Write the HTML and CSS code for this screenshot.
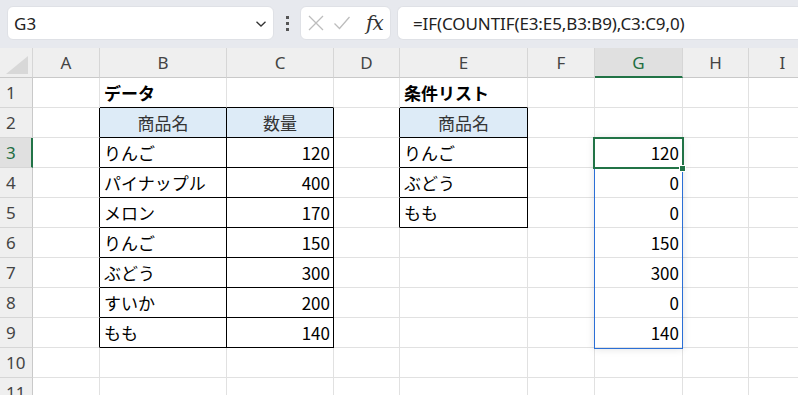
FILE: index.html
```html
<!DOCTYPE html>
<html lang="ja">
<head>
<meta charset="utf-8">
<title>Sheet</title>
<link rel="stylesheet" href="styles.css">
</head>
<body>
<div class="toolbar">
  <div class="namebox">
    <span class="name">G3</span>
    <svg class="chev" width="12" height="8" viewBox="0 0 12 8"><path d="M1.5 1.8 L6 6 L10.5 1.8" fill="none" stroke="#333" stroke-width="1.3"/></svg>
  </div>
  <div class="kebab"><i></i><i></i><i></i></div>
  <div class="fxbox">
    <svg width="18" height="18" viewBox="0 0 18 18"><path d="M2 2 L16 16 M16 2 L2 16" stroke="#bdbdbd" stroke-width="1.3" fill="none"/></svg>
    <svg width="18" height="18" viewBox="0 0 18 18"><path d="M1.5 9.5 L6.5 14.5 L16.5 3" stroke="#bdbdbd" stroke-width="1.3" fill="none"/></svg>
    <span class="fx">fx</span>
  </div>
  <div class="formula">=IF(COUNTIF(E3:E5,B3:B9),C3:C9,0)</div>
</div>

<div class="sheet">
  <div class="corner"><span class="tri"></span></div>
  <div class="ch">A</div><div class="ch">B</div><div class="ch">C</div><div class="ch">D</div><div class="ch">E</div><div class="ch">F</div><div class="ch sel">G</div><div class="ch">H</div><div class="ch">I</div>

  <div class="rh">1</div>
  <div class="c"></div><div class="c bold bb">データ</div><div class="c bb"></div><div class="c"></div><div class="c bold bb">条件リスト</div><div class="c"></div><div class="c"></div><div class="c"></div><div class="c"></div>

  <div class="rh">2</div>
  <div class="c br"></div><div class="c hd bk">商品名</div><div class="c hd bk">数量</div><div class="c br"></div><div class="c hd bk">商品名</div><div class="c"></div><div class="c"></div><div class="c"></div><div class="c"></div>

  <div class="rh rsel">3</div>
  <div class="c br"></div><div class="c bk">りんご</div><div class="c bk num">120</div><div class="c br"></div><div class="c bk">りんご</div><div class="c"></div><div class="c num">120</div><div class="c"></div><div class="c"></div>

  <div class="rh">4</div>
  <div class="c br"></div><div class="c bk">パイナップル</div><div class="c bk num">400</div><div class="c br"></div><div class="c bk">ぶどう</div><div class="c"></div><div class="c num">0</div><div class="c"></div><div class="c"></div>

  <div class="rh">5</div>
  <div class="c br"></div><div class="c bk">メロン</div><div class="c bk num">170</div><div class="c br"></div><div class="c bk">もも</div><div class="c"></div><div class="c num">0</div><div class="c"></div><div class="c"></div>

  <div class="rh">6</div>
  <div class="c br"></div><div class="c bk">りんご</div><div class="c bk num">150</div><div class="c"></div><div class="c"></div><div class="c"></div><div class="c num">150</div><div class="c"></div><div class="c"></div>

  <div class="rh">7</div>
  <div class="c br"></div><div class="c bk">ぶどう</div><div class="c bk num">300</div><div class="c"></div><div class="c"></div><div class="c"></div><div class="c num">300</div><div class="c"></div><div class="c"></div>

  <div class="rh">8</div>
  <div class="c br"></div><div class="c bk">すいか</div><div class="c bk num">200</div><div class="c"></div><div class="c"></div><div class="c"></div><div class="c num">0</div><div class="c"></div><div class="c"></div>

  <div class="rh">9</div>
  <div class="c br"></div><div class="c bk">もも</div><div class="c bk num">140</div><div class="c"></div><div class="c"></div><div class="c"></div><div class="c num">140</div><div class="c"></div><div class="c"></div>

  <div class="rh">10</div>
  <div class="c"></div><div class="c"></div><div class="c"></div><div class="c"></div><div class="c"></div><div class="c"></div><div class="c"></div><div class="c"></div><div class="c"></div>

  <div class="rh">11</div>
  <div class="c"></div><div class="c"></div><div class="c"></div><div class="c"></div><div class="c"></div><div class="c"></div><div class="c"></div><div class="c"></div><div class="c"></div>

  <div class="range"></div>
  <div class="active"></div>
  <div class="handle"></div>
</div>
</body>
</html>
```

FILE: styles.css
```css
* { box-sizing: border-box; }
html, body {
  margin: 0;
  width: 798px;
  height: 395px;
  overflow: hidden;
  background: #fff;
  font-family: "Noto Sans CJK JP", "Noto Sans", sans-serif;
  color: #000;
}
.toolbar {
  height: 48px;
  background: #e7e9ee;
  display: flex;
  align-items: flex-start;
  padding: 6px 0 0 7px;
}
.namebox {
  width: 267px;
  height: 34px;
  background: #fff;
  border-radius: 6px;
  border: 1px solid #dfe1e6;
  display: flex;
  align-items: center;
  justify-content: space-between;
  padding: 0 6px 0 6px;
  font-family: "Noto Sans", sans-serif;
  font-size: 17px;
  color: #222;
}
.chev { margin-top: 2px; }
.kebab {
  width: 26px;
  height: 34px;
  display: flex;
  flex-direction: column;
  align-items: center;
  justify-content: center;
  gap: 3px;
}
.kebab i {
  display: block;
  width: 3px;
  height: 3px;
  background: #555;
}
.fxbox {
  width: 91px;
  height: 34px;
  background: #fff;
  border-radius: 6px;
  border: 1px solid #dfe1e6;
  display: flex;
  align-items: center;
  padding: 0 0 0 6px;
  gap: 8px;
}
.fx {
  font-family: "DejaVu Serif", "Liberation Serif", serif;
  font-style: italic;
  font-size: 20px;
  color: #333;
  margin-left: 7px;
  letter-spacing: -1px;
}
.formula {
  flex: 1;
  height: 34px;
  margin-left: 6px;
  background: #fff;
  border-radius: 6px 0 0 6px;
  border: 1px solid #dfe1e6;
  border-right: none;
  display: flex;
  align-items: center;
  padding-left: 15px;
  font-family: "Noto Sans", sans-serif;
  font-size: 17px;
  letter-spacing: -0.1px;
  color: #222;
}
.sheet {
  position: relative;
  display: grid;
  grid-template-columns: 33px 67px 127px 107px 66px 128px 67px 88px 66px 68px;
  grid-auto-rows: 30px;
  font-size: 17px;
}
.corner {
  background: #efefef;
  border-right: 1px solid #d6d6d6;
  border-bottom: 1px solid #c9c9c9;
  position: relative;
}
.tri {
  position: absolute;
  right: 4px;
  bottom: 3px;
  width: 0;
  height: 0;
  border-left: 22px solid transparent;
  border-bottom: 18px solid #d8d8d8;
}
.ch {
  background: #efefef;
  border-right: 1px solid #d6d6d6;
  border-bottom: 1px solid #c9c9c9;
  display: flex;
  align-items: center;
  justify-content: center;
  font-family: "Noto Sans", sans-serif;
  font-size: 17px;
  color: #444;
}
.ch.sel {
  background: #e0e0e0;
  color: #1e6e42;
  border-bottom: 2px solid #217346;
}
.rh {
  background: #efefef;
  border-right: 1px solid #c9c9c9;
  border-bottom: 1px solid #d6d6d6;
  display: flex;
  align-items: center;
  padding-left: 6px;
  font-family: "Noto Sans", sans-serif;
  font-size: 17px;
  color: #444;
}
.rh.rsel {
  background: #e0e0e0;
  color: #1e6e42;
  border-right: 2px solid #217346;
}
.c {
  border-right: 1px solid #e1e1e1;
  border-bottom: 1px solid #e1e1e1;
  display: flex;
  align-items: center;
  padding: 0 4px;
  white-space: nowrap;
}
.bold { font-weight: 700; }
.bk { border-right-color: #000; border-bottom-color: #000; }
.br { border-right-color: #000; }
.bb { border-bottom-color: #000; }
.hd {
  background: #ddebf7;
  justify-content: center;
  color: #333;
}
.num { justify-content: flex-end; padding-right: 3px; }
.range {
  position: absolute;
  left: 594px;
  top: 90px;
  width: 89px;
  height: 211px;
  border: 1px solid #2b6fd6;
  box-shadow: 0 0 8px rgba(0,0,0,0.12);
  pointer-events: none;
}
.active {
  position: absolute;
  left: 593px;
  top: 89px;
  width: 91px;
  height: 32px;
  border: 2px solid #217346;
}
.handle {
  position: absolute;
  left: 679px;
  top: 117px;
  width: 7px;
  height: 7px;
  background: #217346;
  border: 1px solid #fff;
}
```
